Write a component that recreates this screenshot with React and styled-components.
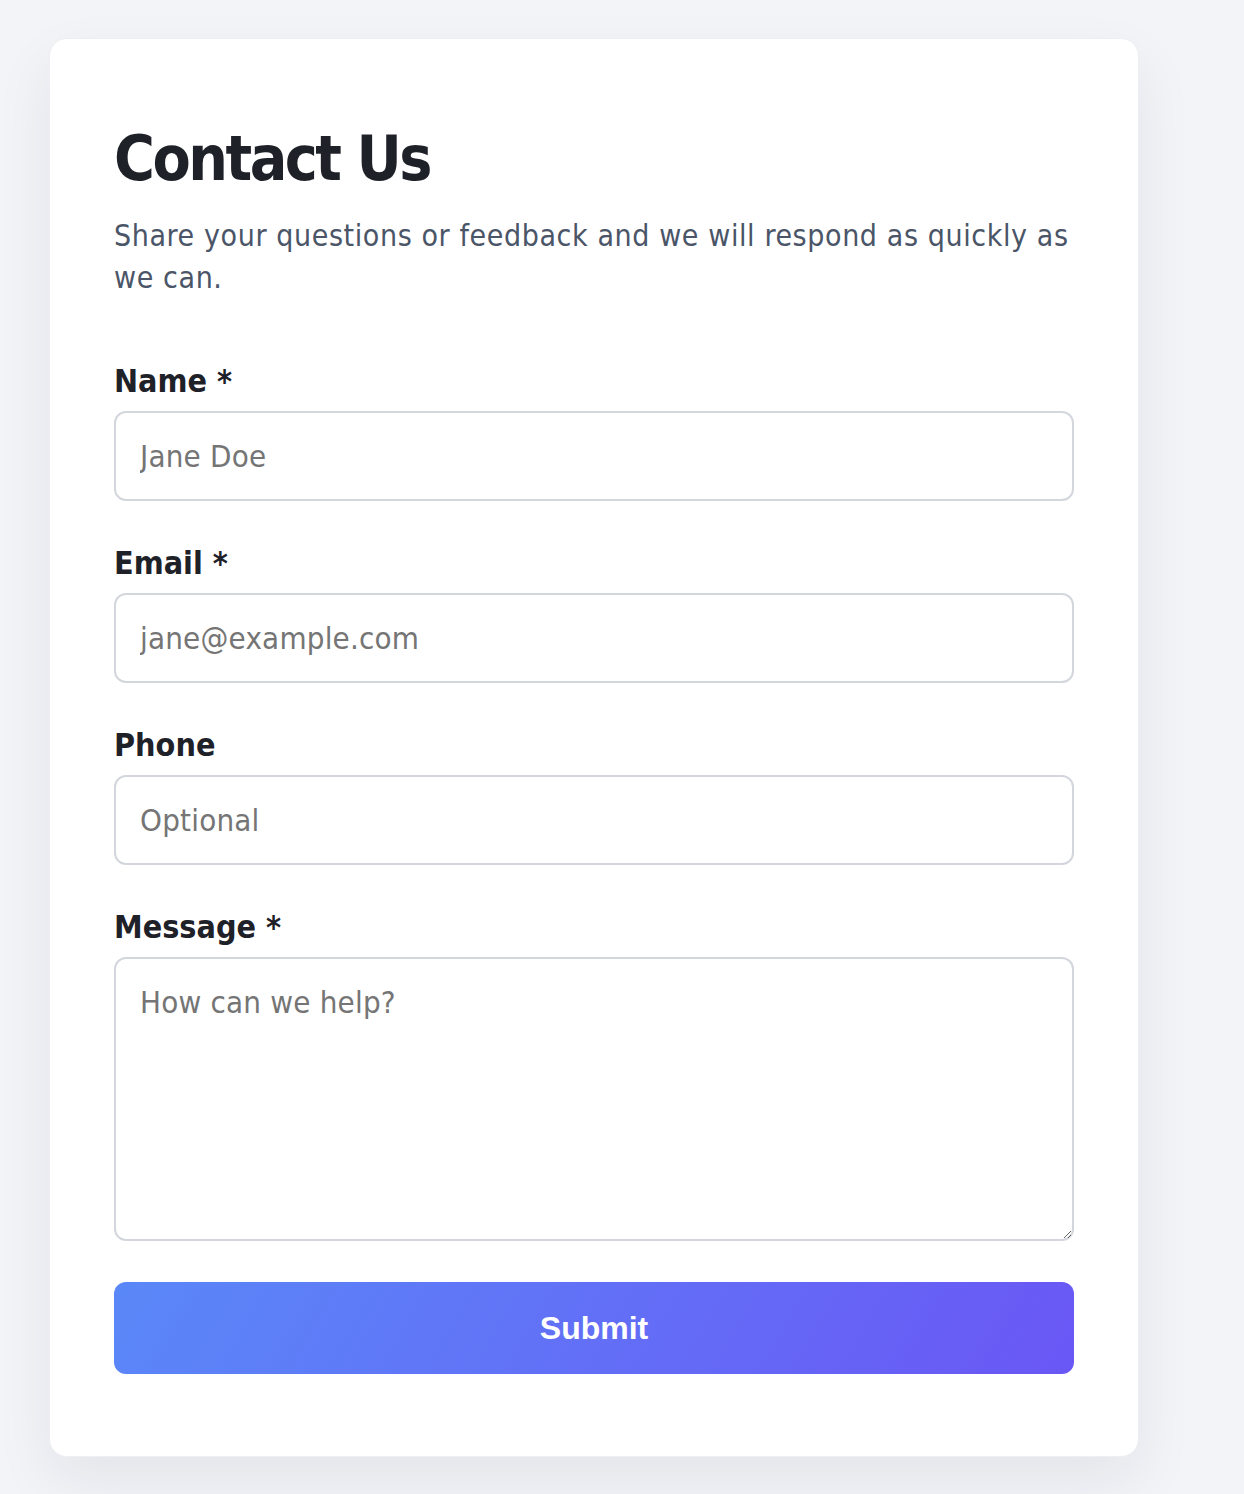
import React from 'react';
import styled, { createGlobalStyle } from 'styled-components';

const GlobalStyle = createGlobalStyle`
  html, body {
    margin: 0;
    padding: 0;
    background: #f3f4f8;
  }
  body {
    font-family: 'DejaVu Sans Condensed', 'DejaVu Sans', sans-serif;
    font-stretch: condensed;
  }
  * { box-sizing: border-box; }
`;

const Page = styled.main`
  min-height: 1494px;
  padding: 38px 48px 38px 49px;
`;

const Card = styled.section`
  width: 1090px;
  background: #ffffff;
  border: 1px solid #eeeff3;
  border-radius: 18px;
  box-shadow: 0 24px 60px rgba(15, 23, 42, 0.07);
  padding: 83px 64px 82px 64px;
`;

const Title = styled.h1`
  margin: 0 0 19px;
  font-size: 62px;
  line-height: 1.2;
  font-weight: 700;
  letter-spacing: -2.5px;
  color: #1f2128;
`;

const Lead = styled.p`
  margin: 0 0 62px;
  font-size: 30px;
  line-height: 42px;
  letter-spacing: 0.6px;
  color: #4b5568;
`;

const Form = styled.form`
  display: flex;
  flex-direction: column;
  gap: 42px;
`;

const Field = styled.div`
  display: flex;
  flex-direction: column;
  gap: 10px;
`;

const Label = styled.label`
  font-size: 32px;
  line-height: 40px;
  font-weight: 700;
  color: #1f2128;
`;

const controlStyles = `
  width: 100%;
  font-family: inherit;
  font-stretch: condensed;
  font-size: 31px;
  letter-spacing: 0.2px;
  color: #1f2128;
  background: #ffffff;
  border: 2px solid #d3d6dc;
  border-radius: 12px;
  padding: 0 24px;
  outline: none;
  &::placeholder { color: #757575; }
`;

const Input = styled.input`
  ${controlStyles}
  height: 90px;
`;

const TextArea = styled.textarea`
  ${controlStyles}
  height: 284px;
  padding-top: 24px;
  line-height: 39px;
  resize: vertical;
`;

const Submit = styled.button`
  margin-top: -1px;
  height: 92px;
  border: none;
  border-radius: 12px;
  background: linear-gradient(120deg, #5a88f8 0%, #6a57f5 100%);
  color: #ffffff;
  font-family: 'Liberation Sans', Arial, sans-serif;
  font-size: 32px;
  font-weight: 700;
  cursor: pointer;
`;

export default function App() {
  return (
    <>
      <GlobalStyle />
      <Page>
        <Card>
          <Title>Contact Us</Title>
          <Lead>Share your questions or feedback and we will respond as quickly as we can.</Lead>
          <Form onSubmit={(e) => e.preventDefault()}>
            <Field>
              <Label htmlFor="name">Name *</Label>
              <Input id="name" type="text" placeholder="Jane Doe" />
            </Field>
            <Field>
              <Label htmlFor="email">Email *</Label>
              <Input id="email" type="email" placeholder="jane@example.com" />
            </Field>
            <Field>
              <Label htmlFor="phone">Phone</Label>
              <Input id="phone" type="tel" placeholder="Optional" />
            </Field>
            <Field>
              <Label htmlFor="message">Message *</Label>
              <TextArea id="message" placeholder="How can we help?" />
            </Field>
            <Submit type="submit">Submit</Submit>
          </Form>
        </Card>
      </Page>
    </>
  );
}
